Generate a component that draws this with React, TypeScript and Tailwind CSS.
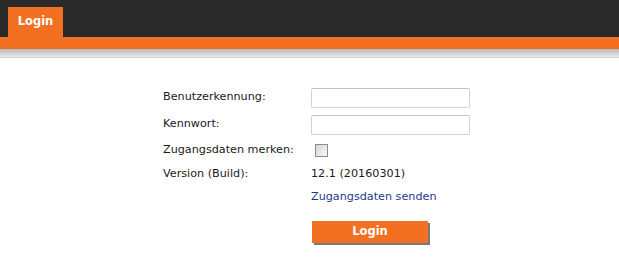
import React from 'react';

function LoginPage() {
  const rows = [
    { label: 'Benutzerkennung:', kind: 'input', h: 'h-[27px]' },
    { label: 'Kennwort:', kind: 'password', h: 'h-[27px]' },
    { label: 'Zugangsdaten merken:', kind: 'check', h: 'h-[24px]' },
    { label: 'Version (Build):', kind: 'text', h: 'h-[25px]' },
    { label: '', kind: 'link', h: 'h-[20px]' },
  ];

  return (
    <div className="min-h-screen bg-white font-['DejaVu_Sans',Verdana,sans-serif] text-[11.2px] text-[#1a1a1a]">
      {/* HEADER */}
      <div className="h-[37px] bg-[#2a2a2a] flex items-end pl-[8px]">
        <div className="h-[30px] w-[55px] bg-[#f37022] flex items-center justify-center text-white font-bold text-[11.5px]">
          Login
        </div>
      </div>
      <div className="h-[12px] bg-[#f37022]"></div>
      <div className="h-[9px] bg-gradient-to-b from-[#b9b9b9] to-[#e9e9e9] border-b border-[#d2d2d2]"></div>

      {/* FORM */}
      <div className="pt-[26px] pl-[163px]">
        {rows.map((row, i) => (
          <div key={i} className={`flex items-center ${row.h}`}>
            <div className="w-[148px] shrink-0">{row.label}</div>
            {(row.kind === 'input' || row.kind === 'password') && (
              <input
                type={row.kind === 'password' ? 'password' : 'text'}
                className="w-[159px] h-[20px] border border-[#d3d3d3] border-t-[#c2c2c2] rounded-[2px] bg-white outline-none"
              />
            )}
            {row.kind === 'check' && (
              <div className="ml-[4px] w-[13px] h-[13px] border border-[#8c8c8c] bg-gradient-to-br from-[#d6d6d6] to-[#fafafa]"></div>
            )}
            {row.kind === 'text' && <div>12.1 (20160301)</div>}
            {row.kind === 'link' && (
              <a href="#" className="text-[#1c3a8a]">Zugangsdaten senden</a>
            )}
          </div>
        ))}

        <div className="mt-[14px] pl-[149px]">
          <button className="w-[116px] h-[22px] bg-[#f37022] text-white font-bold text-[11.5px] shadow-[2px_2px_0_#7a7a7a]">
            Login
          </button>
        </div>
      </div>
    </div>
  );
}

export default function App() {
  return <LoginPage />;
}
